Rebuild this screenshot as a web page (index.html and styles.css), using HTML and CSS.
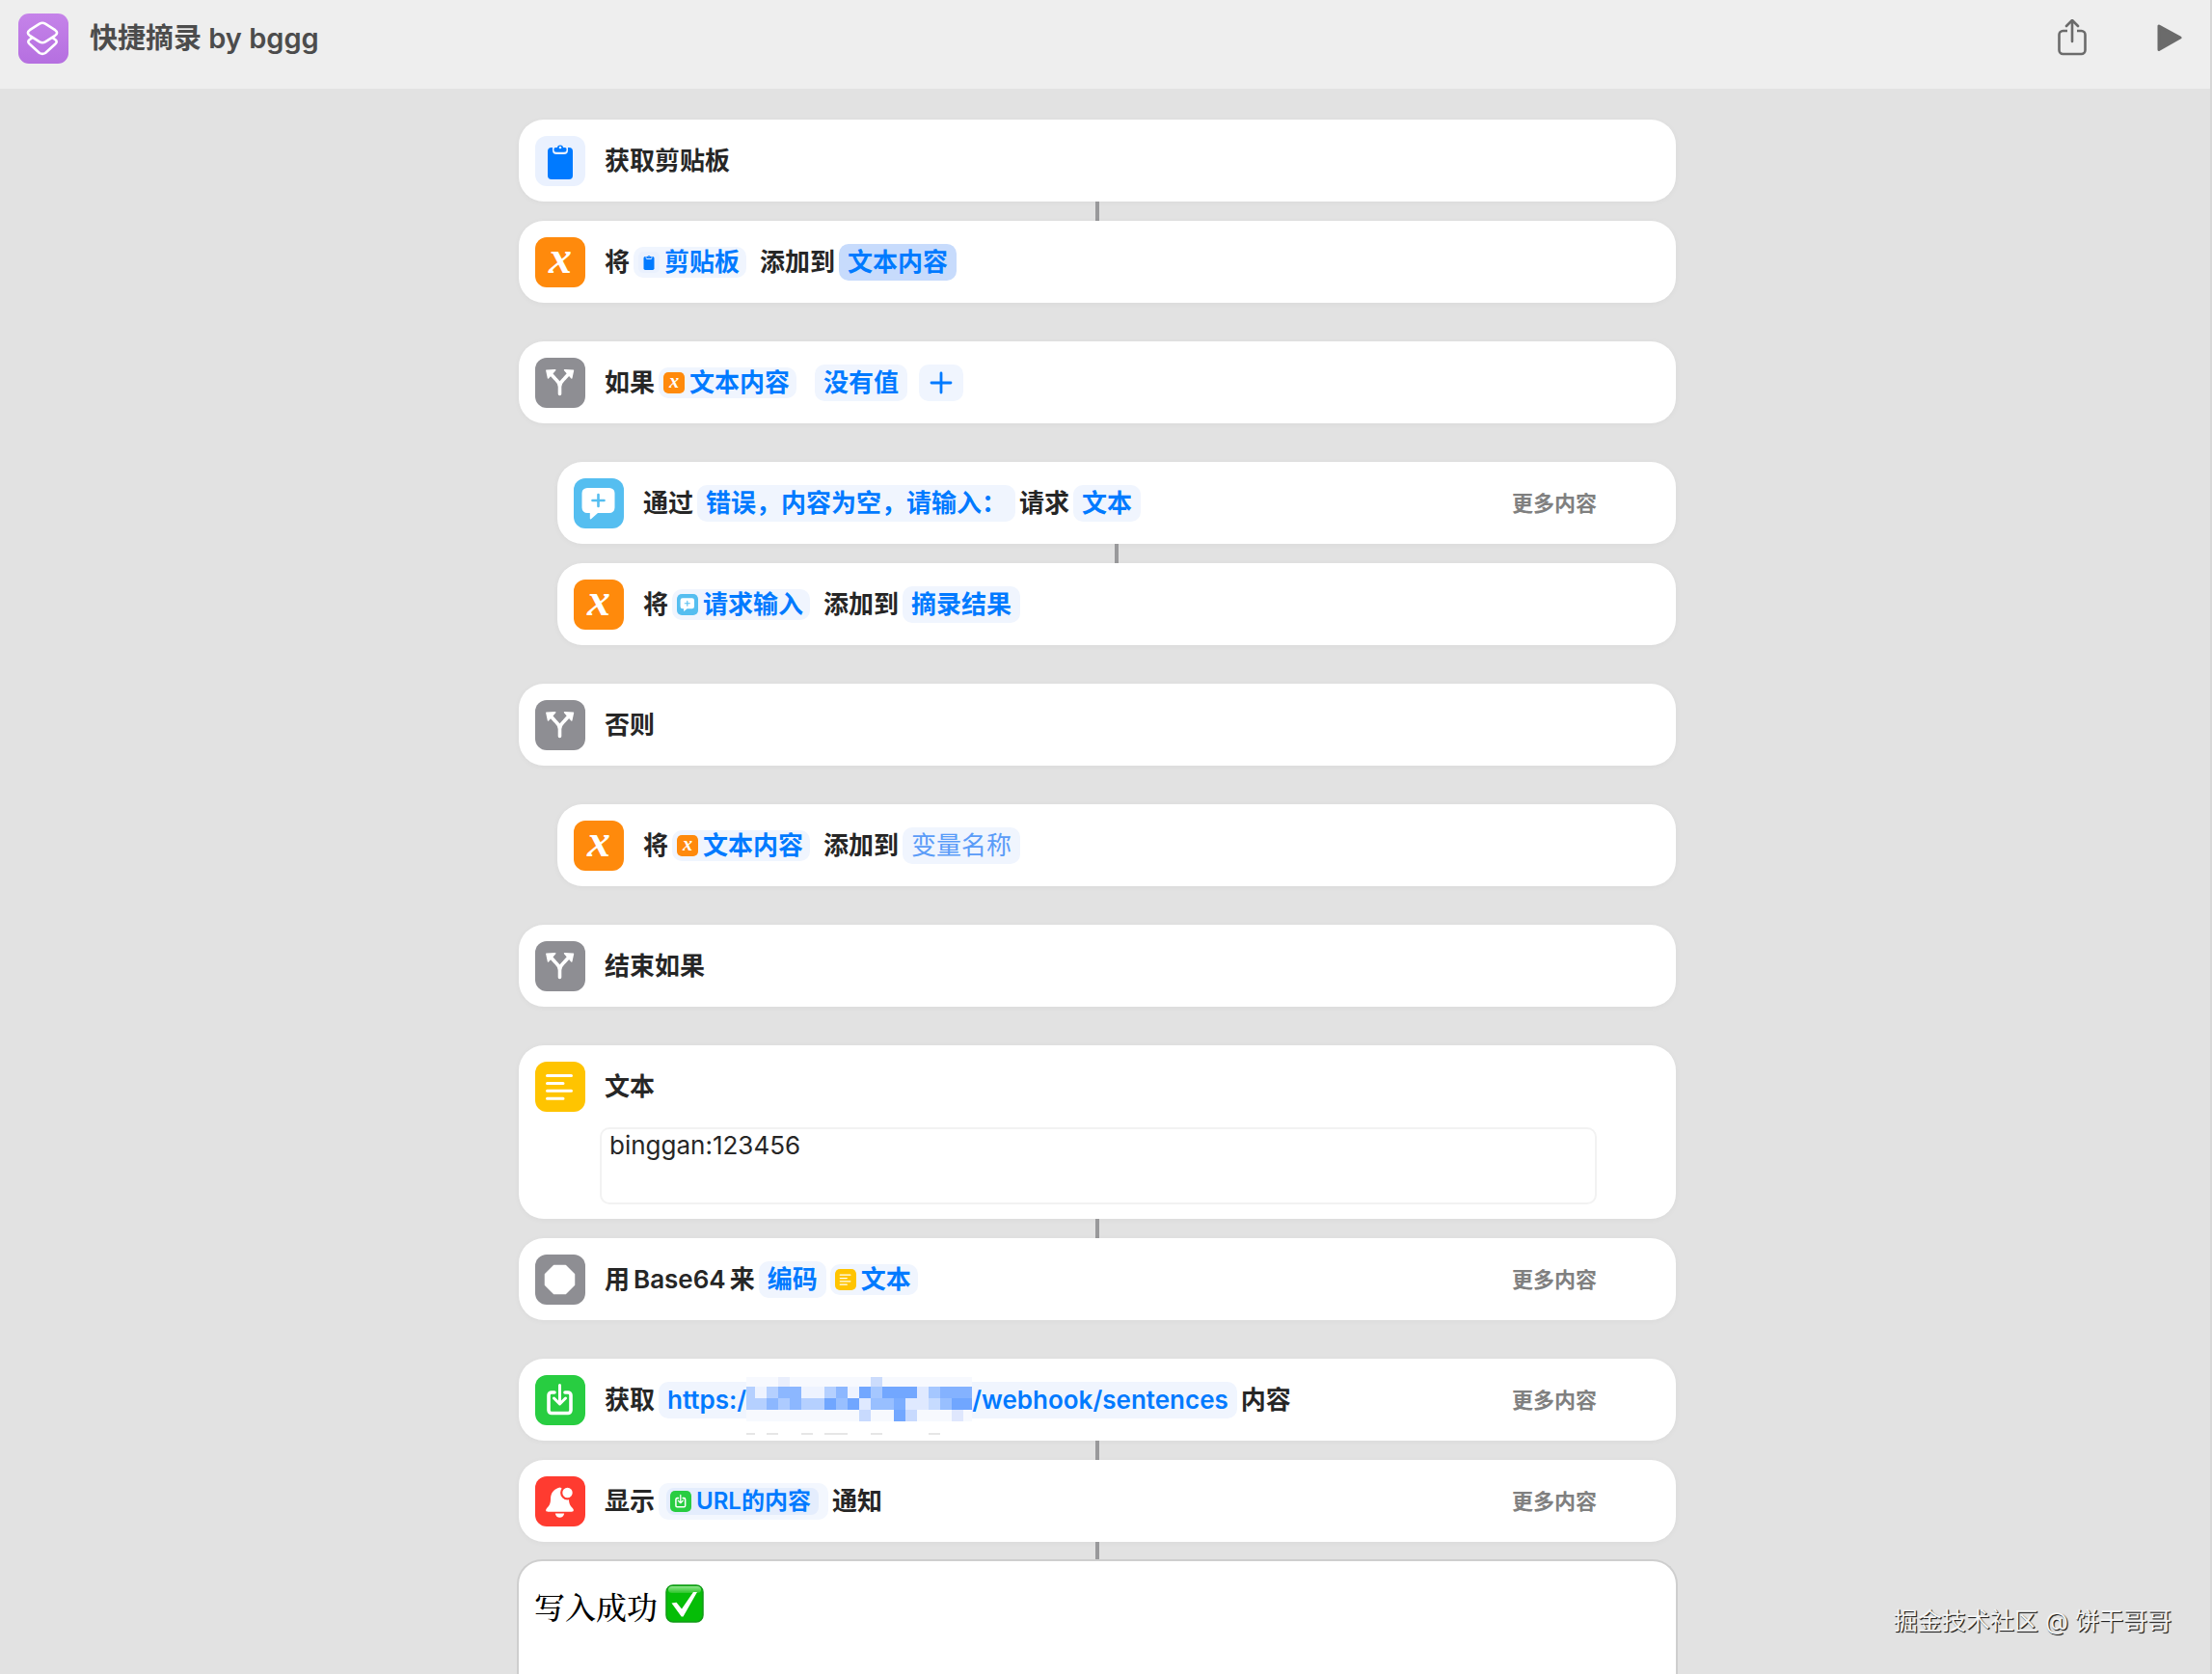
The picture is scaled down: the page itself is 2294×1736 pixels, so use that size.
FILE: index.html
```
<!DOCTYPE html>
<html lang="zh-CN">
<head>
    <meta charset="UTF-8">
    <meta name="viewport" content="width=device-width, initial-scale=1.0">
    <title>快捷摘录 by bggg</title>
    <link rel="stylesheet" href="styles.css">
</head>
<body>
    <!-- Icon set, reused by the cards and the small variable tokens -->
    <svg class="sprite" aria-hidden="true">
        <symbol id="i-clipboard" viewBox="0 0 52 52">
            <rect width="52" height="52" rx="12" fill="#eaf1fe"/>
            <rect x="13" y="12" width="26" height="33" rx="4" fill="#007aff"/>
            <path d="M18 11h3.500a4.500 4.500 0 0 1 9 0H34v4a4 4 0 0 1-4 4h-8a4 4 0 0 1-4-4z" fill="#eaf1fe"/>
            <path d="M19.500 13.500a1.500 1.500 0 0 1 1.500-1.500h1.800a3.300 3.300 0 0 1 6.400 0H31a1.500 1.500 0 0 1 1.500 1.500v.8a2.500 2.500 0 0 1-2.500 2.500h-8a2.500 2.500 0 0 1-2.500-2.500z" fill="#007aff"/>
            <circle cx="26" cy="12" r="1.300" fill="#eaf1fe"/>
        </symbol>
        <symbol id="i-variable" viewBox="0 0 52 52">
            <rect width="52" height="52" rx="12" fill="#ff8a0c"/>
            <text x="26" y="37" class="x-glyph">x</text>
        </symbol>
        <symbol id="i-branch" viewBox="0 0 52 52">
            <rect width="52" height="52" rx="12" fill="#8e8e93"/>
            <path d="M25.500 37.500V30c0-4-2-5.500-4.500-8l-4.500-5M25.500 30c0-4 2-5.500 4.500-8l4.500-5" fill="none" stroke="#fff" stroke-width="3.600" stroke-linecap="round"/>
            <path d="M11.800 13.200l9-.4-7.300 8.200zM39.500 13.200l-9-.4 7.300 8.200z" fill="#fff" stroke="#fff" stroke-width="1.400" stroke-linejoin="round"/>
        </symbol>
        <symbol id="i-ask" viewBox="0 0 52 52">
            <rect width="52" height="52" rx="12" fill="#55bef0"/>
            <path d="M14 10h23a5.500 5.500 0 0 1 5.500 5.500v15A5.500 5.500 0 0 1 37 36H25l-7 6.200c-.7.500-1.200.2-1.200-.6V36H14a5.500 5.500 0 0 1-5.500-5.500v-15A5.500 5.500 0 0 1 14 10z" fill="#fff"/>
            <path d="M25.500 17v12M19.500 23h12" stroke="#55bef0" stroke-width="2.600" stroke-linecap="round"/>
        </symbol>
        <symbol id="i-text" viewBox="0 0 52 52">
            <rect width="52" height="52" rx="12" fill="#ffc400"/>
            <path d="M12.500 14.500h25M12.500 22.500h16.500M12.500 30.300h25M12.500 38.200h16.500" stroke="#fff" stroke-width="3" stroke-linecap="round"/>
        </symbol>
        <symbol id="i-base64" viewBox="0 0 52 52">
            <rect width="52" height="52" rx="12" fill="#8e8e93"/>
            <path d="M19.500 11.500h12l9 9v11l-9 9h-12l-9-9v-11z" fill="#fff" stroke="#fff" stroke-width="1.500" stroke-linejoin="round"/>
        </symbol>
        <symbol id="i-download" viewBox="0 0 52 52">
            <rect width="52" height="52" rx="12" fill="#28cd41"/>
            <path d="M20 18h-3a3 3 0 0 0-3 3v15.500a3 3 0 0 0 3 3h17a3 3 0 0 0 3-3V21a3 3 0 0 0-3-3h-3" fill="none" stroke="#fff" stroke-width="3.600" stroke-linecap="round"/>
            <path d="M25.500 10.500v19M19.500 24l6 6 6-6" fill="none" stroke="#fff" stroke-width="3" stroke-linecap="round" stroke-linejoin="round"/>
        </symbol>
        <symbol id="i-bell" viewBox="0 0 52 52">
            <rect width="52" height="52" rx="12" fill="#ff3b30"/>
            <path d="M26 11.500c-6 1-10 5.500-10 12 0 5-1.500 7-3.800 9.500-1.800 2-1.200 3.700 1 3.700h24.600c2.200 0 2.800-1.700 1-3.700-2.300-2.500-3.800-4.500-3.800-9.500V18z" fill="#fff"/>
            <path d="M20.800 38.500h9.400c-.5 2.800-2.400 4.300-4.700 4.300s-4.200-1.500-4.700-4.300z" fill="#fff"/>
            <circle cx="33.500" cy="17" r="6.300" fill="#fff" stroke="#ff3b30" stroke-width="2.200"/>
        </symbol>
    </svg>

    <header class="toolbar">
        <svg class="app-icon" viewBox="0 0 52 52" aria-hidden="true">
            <defs>
                <linearGradient id="purple" x1="0" y1="0" x2="0" y2="1">
                    <stop offset="0" stop-color="#c583e9"/>
                    <stop offset="1" stop-color="#b56fe0"/>
                </linearGradient>
            </defs>
            <rect width="52" height="52" rx="11" fill="url(#purple)"/>
            <g fill="none" stroke="#fff" stroke-width="2.600" stroke-linejoin="round" stroke-linecap="round">
                <path d="M22 10.600q3-1.800 6 0l10.200 6.600q3.800 2.800 0 5.600l-10.200 6.600q-3 1.800-6 0l-10.200-6.600q-3.800-2.800 0-5.600z"/>
                <path d="M14 25.500l-2.200 1.500q-3 2.300 0 4.800l10.200 9.200q3 1.800 6 0l10.200-9.200q3-2.500 0-4.800l-2.200-1.500"/>
            </g>
        </svg>
        <h1>快捷摘录 by bggg</h1>
        <button class="tool" type="button" aria-label="共享">
            <svg width="30" height="40" viewBox="0 0 30 40" fill="none" stroke="#6b6b6b" stroke-width="2.600" stroke-linecap="round" stroke-linejoin="round">
                <path d="M10 12H5.500a4 4 0 0 0-4 4v16a4 4 0 0 0 4 4h19a4 4 0 0 0 4-4V16a4 4 0 0 0-4-4H20" stroke-linecap="butt"/>
                <path d="M15 23V1.500M9 7l6-6 6 6"/>
            </svg>
        </button>
        <button class="tool" type="button" aria-label="运行">
            <svg width="26" height="30" viewBox="0 0 26 30">
                <path d="M2 2v24.500L24 14z" fill="#6b6b6b" stroke="#6b6b6b" stroke-width="3" stroke-linejoin="round"/>
            </svg>
        </button>
    </header>

    <main class="workflow">
        <section class="card">
            <svg class="icon"><use href="#i-clipboard"/></svg>
            <span>获取剪贴板</span>
        </section>
        <div class="link"></div>
        <section class="card">
            <svg class="icon"><use href="#i-variable"/></svg>
            <span>将</span>
            <button class="var" type="button"><svg class="mini"><use href="#i-clipboard"/></svg>剪贴板</button>
            <span>添加到</span>
            <button class="chip selected" type="button">文本内容</button>
        </section>

        <section class="card apart">
            <svg class="icon"><use href="#i-branch"/></svg>
            <span>如果</span>
            <button class="var" type="button"><svg class="mini"><use href="#i-variable"/></svg>文本内容</button>
            <button class="chip condition" type="button">没有值</button>
            <button class="chip" type="button" aria-label="添加条件">
                <svg width="28" height="24" viewBox="0 0 28 24"><path d="M14 2v20M4 12h20" stroke="#007aff" stroke-width="2.800" stroke-linecap="round"/></svg>
            </button>
        </section>

        <div class="nested apart">
            <section class="card">
                <svg class="icon"><use href="#i-ask"/></svg>
                <span>通过</span>
                <button class="chip" type="button">错误，内容为空，请输入：</button>
                <span>请求</span>
                <button class="chip" type="button">文本</button>
                <button class="more" type="button">更多内容</button>
            </section>
            <div class="link"></div>
            <section class="card">
                <svg class="icon"><use href="#i-variable"/></svg>
                <span>将</span>
                <button class="var" type="button"><svg class="mini"><use href="#i-ask"/></svg>请求输入</button>
                <span>添加到</span>
                <button class="chip" type="button">摘录结果</button>
            </section>
        </div>

        <section class="card apart">
            <svg class="icon"><use href="#i-branch"/></svg>
            <span>否则</span>
        </section>

        <div class="nested apart">
            <section class="card">
                <svg class="icon"><use href="#i-variable"/></svg>
                <span>将</span>
                <button class="var" type="button"><svg class="mini"><use href="#i-variable"/></svg>文本内容</button>
                <span>添加到</span>
                <button class="chip empty" type="button">变量名称</button>
            </section>
        </div>

        <section class="card apart">
            <svg class="icon"><use href="#i-branch"/></svg>
            <span>结束如果</span>
        </section>

        <section class="card apart">
            <svg class="icon"><use href="#i-text"/></svg>
            <label for="text-value">文本</label>
            <textarea id="text-value" class="text-value" spellcheck="false">binggan:123456</textarea>
        </section>
        <div class="link"></div>
        <section class="card">
            <svg class="icon"><use href="#i-base64"/></svg>
            <span>用</span>
            <span>Base64</span>
            <span>来</span>
            <button class="chip" type="button">编码</button>
            <button class="var" type="button"><svg class="mini"><use href="#i-text"/></svg>文本</button>
            <button class="more" type="button">更多内容</button>
        </section>

        <section class="card apart">
            <svg class="icon"><use href="#i-download"/></svg>
            <span>获取</span>
            <button class="chip" type="button">https:/<svg class="redacted" viewBox="0 0 234 38" aria-label="已隐藏">
                    <rect y="-5" width="234" height="46" fill="#f7f9fe"/>
                    <path d="M33-5h12v10H33z" fill="#e9eefc"/>
                    <path d="M129-5h12v10h-12z" fill="#ccdcfc"/>
                    <!-- upper row -->
                    <path d="M0 5h9v12H0zM21 5h12v12H21zM81 5h12v12H81z" fill="#b5d0ff"/>
                    <path d="M9 5h12v12H9zM57 5h24v12H57zM105 5h12v12h-12z" fill="#eef3ff"/>
                    <path d="M33 5h24v12H33zM93 5h12v12H93z" fill="#8cb7ff"/>
                    <path d="M117 5h12v12h-12zM141 5h36v12h-36z" fill="#72a7ff"/>
                    <path d="M129 5h12v12h-12zM189 5h12v12h-12z" fill="#a5c7ff"/>
                    <path d="M177 5h12v12h-12z" fill="#dfe9ff"/>
                    <path d="M201 5h33v12h-33z" fill="#84b2ff"/>
                    <!-- lower row -->
                    <path d="M0 17h21v12H0zM57 17h24v12H57z" fill="#b5d0ff"/>
                    <path d="M21 17h12v12H21zM45 17h12v12H45z" fill="#8cb7ff"/>
                    <path d="M33 17h12v12H33z" fill="#adcbff"/>
                    <path d="M81 17h12v12H81zM105 17h12v12h-12zM213 17h21v12h-21z" fill="#70a6ff"/>
                    <path d="M93 17h12v12H93zM129 17h24v12h-24zM201 17h12v12h-12z" fill="#98bfff"/>
                    <path d="M117 17h12v12h-12zM165 17h24v12h-24z" fill="#dfe9ff"/>
                    <path d="M153 17h12v12h-12z" fill="#7badff"/>
                    <path d="M189 17h12v12h-12z" fill="#c6dbff"/>
                    <!-- descenders -->
                    <path d="M117 29h12v12h-12zM165 29h12v12h-12z" fill="#c8dafe"/>
                    <path d="M153 29h12v12h-12z" fill="#72a7ff"/>
                    <path d="M213 29h12v12h-12z" fill="#dfe7fd"/>
                    <path d="M0 53h9v2H0zM21 53h12v2H21zM57 53h12v2H57zM81 53h24v2H81zM129 53h12v2h-12zM189 53h12v2h-12z" fill="#e6e6e6"/>
                </svg>/webhook/sentences</button>
            <span>内容</span>
            <button class="more" type="button">更多内容</button>
        </section>
        <div class="link"></div>
        <section class="card">
            <svg class="icon"><use href="#i-bell"/></svg>
            <label for="notice">显示</label>
            <button class="chip url" type="button"><span class="url-var"><svg class="mini"><use href="#i-download"/></svg>URL的内容</span></button>
            <span>通知</span>
            <button class="more" type="button">更多内容</button>
        </section>
        <div class="link"></div>
        <section class="notice">
            <textarea id="notice" class="notice-text" rows="1" spellcheck="false">写入成功</textarea>
            <svg width="40" height="40" viewBox="0 0 40 40" aria-label="完成">
                <defs>
                    <linearGradient id="gloss" x1="0" y1="0" x2="0" y2="1">
                        <stop offset="0" stop-color="#8fe58b"/>
                        <stop offset="1" stop-color="#2cc62a"/>
                    </linearGradient>
                </defs>
                <rect x="1" y="1" width="38" height="38" rx="7" fill="#05bd07" stroke="#119a17" stroke-width="1.500"/>
                <rect x="3" y="2" width="34" height="7" rx="4" fill="url(#gloss)"/>
                <path d="M6.500 19.500l5-.8 5.500 6.800L29 8h4L18.500 33.500h-1.800z" fill="#fff"/>
            </svg>
        </section>
    </main>

    <p class="watermark">掘金技术社区 @ 饼干哥哥</p>
</body>
</html>
```
FILE: styles.css
```
* {
    box-sizing: border-box;
}

body {
    display: flex;
    flex-direction: column;
    margin: 0;
    min-height: 100vh;
    position: relative;
    background: #e2e2e2;
    border-right: 2px solid #d6d6d6;
    color: #262626;
    font-family: Inter, "Noto Sans CJK SC", sans-serif;
    font-size: 26px;
    font-weight: 600;
    line-height: 38px;
}

button {
    font: inherit;
    border: none;
    background: none;
    padding: 0;
    cursor: pointer;
    white-space: nowrap;
}

textarea {
    display: block;
    resize: none;
    outline: none;
    overflow: hidden;
    background: none;
}

svg {
    display: block;
    flex: none;
}

.sprite {
    display: none;
}

.x-glyph {
    fill: #fff;
    font-family: "Liberation Serif", serif;
    font-size: 48px;
    font-style: italic;
    font-weight: 700;
    text-anchor: middle;
}

/* top bar */
.toolbar {
    display: flex;
    align-items: center;
    padding: 14px 29px 26px 19px;
    background: #eeeeee;
}

.app-icon {
    width: 52px;
    height: 52px;
    margin-right: 22px;
}

.toolbar h1 {
    flex: 1;
    margin: 0;
    color: #4c4c4c;
    font-size: 29px;
    font-weight: 600;
    line-height: 40px;
}

.tool {
    margin-left: 73px;
}

/* action list */
.workflow {
    display: flex;
    flex-direction: column;
    flex: 1;
    width: 1216px;
    max-width: 100%;
    margin: 0 auto;
    padding: 32px 16px 0 0;
}

.card {
    display: flex;
    flex-wrap: wrap;
    align-items: center;
    column-gap: 4px;
    padding: 0 82px 0 17px;
    border-radius: 26px;
    background: #fff;
    box-shadow: 0 1px 6px rgba(0, 0, 0, 0.04);
}

.apart {
    margin-top: 40px;
}

.nested {
    margin-left: 40px;
}

.link {
    width: 4px;
    height: 20px;
    margin: 0 auto;
    background: #99999b;
}

.icon {
    width: 52px;
    height: 52px;
    margin: 17px 16px 16px 0;
}

/* tokens inside an action */
.chip,
.var {
    display: flex;
    align-items: center;
    border-radius: 10px;
    background: #f0f5fe;
    color: #007aff;
}

.chip {
    height: 38px;
    padding: 0 9px;
}

.var {
    height: 32px;
    gap: 5px;
    margin-right: 10px;
    padding: 0 7px 0 5px;
}

.mini {
    width: 22px;
    height: 22px;
}

.selected {
    background: #c7dbfc;
}

.condition {
    margin: 0 8px 0 5px;
}

.empty {
    color: #5a9cf8;
    font-weight: 400;
}

.url {
    padding: 0 10px 0 8px;
    background: #f3f7fe;
}

.url-var {
    display: flex;
    align-items: center;
    gap: 5px;
    height: 28px;
    padding: 0 8px 0 4px;
    border-radius: 8px;
    background: #e4edfd;
    font-size: 24px;
}

.redacted {
    width: 234px;
    height: 38px;
    overflow: visible;
}

.more {
    margin-left: auto;
    color: #808080;
    font-size: 22px;
}

.text-value {
    flex: 1 0 90%;
    height: 80px;
    margin: 0 0 15px 67px;
    padding: 0 8px;
    border: 2px solid #f2f2f2;
    border-radius: 10px;
    color: #262626;
    font: 400 26px/34px Inter, sans-serif;
}

/* notification body */
.notice {
    display: flex;
    flex: 1;
    align-items: flex-start;
    gap: 8px;
    margin: -2px -2px 0;
    padding: 24px 16px;
    border: 2px solid #cecece;
    border-bottom: none;
    border-radius: 26px 26px 0 0;
    background: #fff;
}

.notice-text {
    width: 128px;
    height: 44px;
    padding: 0;
    border: none;
    color: #000;
    font: 500 32px/44px "Noto Serif CJK SC", "Noto Sans CJK SC", serif;
}

.watermark {
    position: absolute;
    right: 40px;
    bottom: 36px;
    margin: 0;
    color: #f4f4f4;
    font-size: 25px;
    font-weight: 400;
    text-shadow: 1px 1px 1px #222, 1px 1px 0 #444;
}
```
